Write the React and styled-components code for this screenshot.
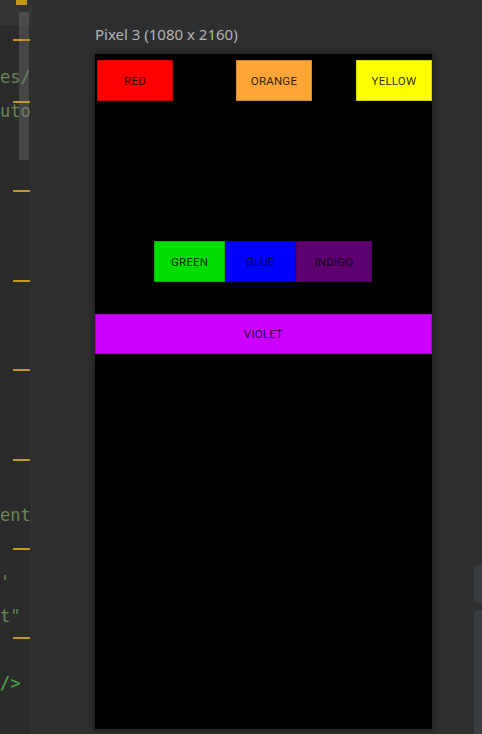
import React from "react";
import styled, { createGlobalStyle } from "styled-components";

const Global = createGlobalStyle`
  html, body { margin: 0; padding: 0; background: #2e2f31; }
  body { width: 482px; height: 734px; overflow: hidden; }
`;

const Page = styled.div`
  display: flex;
  width: 482px;
  height: 734px;
  overflow: hidden;
`;

const Editor = styled.div`
  position: relative;
  width: 31px;
  flex: none;
  background: #2b2b2b;
  border-right: 1px solid #313234;
  overflow: hidden;
  font-family: "DejaVu Sans Mono", "Liberation Mono", monospace;
  font-size: 17px;
`;

const EditorTop = styled.div`
  height: 25px;
  background: #313335;
`;

const Code = styled.div`
  padding-top: 36px;
  display: flex;
  flex-direction: column;
`;

const CodeLine = styled.div`
  height: 33.7px;
  line-height: 33.7px;
  white-space: nowrap;
  color: ${(p) => (p.$tag ? "#4fae4a" : "#6a8759")};
  margin-left: ${(p) => p.$shift || 0}px;
`;

const Scrollbar = styled.div`
  position: absolute;
  left: 19px;
  top: 12px;
  width: 10px;
  height: 148px;
  background: rgba(120, 120, 120, 0.35);
`;

const TopMark = styled.div`
  position: absolute;
  left: 16px;
  top: 0;
  width: 11px;
  height: 5px;
  background: #c6981e;
`;

const Mark = styled.div`
  position: absolute;
  left: 13px;
  width: 17px;
  height: 2px;
  background: #c6981e;
`;

const Surface = styled.div`
  position: relative;
  flex: 1;
  background: #2e2f31;
  padding-left: 63px;
  padding-top: 24px;
  font-family: "Noto Sans", "Open Sans", sans-serif;
`;

const DeviceTitle = styled.div`
  height: 20px;
  font-size: 15px;
  line-height: 20px;
  color: #b4b4b4;
`;

const Screen = styled.div`
  margin-top: 10px;
  width: 337px;
  height: 675px;
  background: #000;
  box-shadow: 0 0 6px 2px rgba(0, 0, 0, 0.35);
  display: flex;
  flex-direction: column;
  font-family: Roboto, "Noto Sans", sans-serif;
`;

const Row = styled.div`
  display: flex;
  margin-top: ${(p) => p.$top}px;
  padding-left: ${(p) => p.$left || 0}px;
`;

const Btn = styled.div`
  width: ${(p) => p.$w}px;
  height: ${(p) => p.$h || 41}px;
  margin-left: ${(p) => p.$ml || 0}px;
  background: ${(p) => p.$bg};
  box-shadow: inset 0 0 0 1px rgba(0, 0, 0, 0.18);
  display: flex;
  align-items: center;
  justify-content: center;
  font-size: 11.5px;
  font-weight: 400;
  letter-spacing: 0.2px;
  color: rgba(0, 0, 0, 0.85);
  flex: none;
`;

const SideScroll = styled.div`
  position: absolute;
  right: 0;
  width: 8px;
  top: ${(p) => p.$top}px;
  height: ${(p) => p.$h}px;
  background: #3a3d40;
  border-radius: 4px 0 0 4px;
`;

const lines = [
  { t: "es/" },
  { t: "uto" },
  ...Array.from({ length: 11 }, () => ({ t: "" })),
  { t: "ent" },
  { t: "" },
  { t: "'" },
  { t: "t\"" },
  { t: "" },
  { t: "/>", tag: true },
];

const marks = [39, 101, 190, 280, 369, 459, 548, 637];

export default function App() {
  return (
    <>
      <Global />
      <Page>
        <Editor>
          <EditorTop />
          <Code>
            {lines.map((l, i) => (
              <CodeLine key={i} $tag={l.tag}>
                {l.t || "\u00a0"}
              </CodeLine>
            ))}
          </Code>
          <Scrollbar />
          <TopMark />
          {marks.map((y) => (
            <Mark key={y} style={{ top: y }} />
          ))}
        </Editor>
        <Surface>
          <DeviceTitle>Pixel 3 (1080 x 2160)</DeviceTitle>
          <Screen>
            <Row $top={6} $left={2}>
              <Btn $w={76} $bg="#ff0000">RED</Btn>
              <Btn $w={76} $ml={63} $bg="#ffa535">ORANGE</Btn>
              <Btn $w={76} $ml={44} $bg="#ffff00">YELLOW</Btn>
            </Row>
            <Row $top={140} $left={59}>
              <Btn $w={71} $bg="#00dd00">GREEN</Btn>
              <Btn $w={71} $bg="#0000ff">BLUE</Btn>
              <Btn $w={76} $bg="#5f0070">INDIGO</Btn>
            </Row>
            <Row $top={32}>
              <Btn $w={337} $h={40} $bg="#cc00ff">VIOLET</Btn>
            </Row>
          </Screen>
          <SideScroll $top={565} $h={38} />
          <SideScroll $top={610} $h={130} />
        </Surface>
      </Page>
    </>
  );
}
